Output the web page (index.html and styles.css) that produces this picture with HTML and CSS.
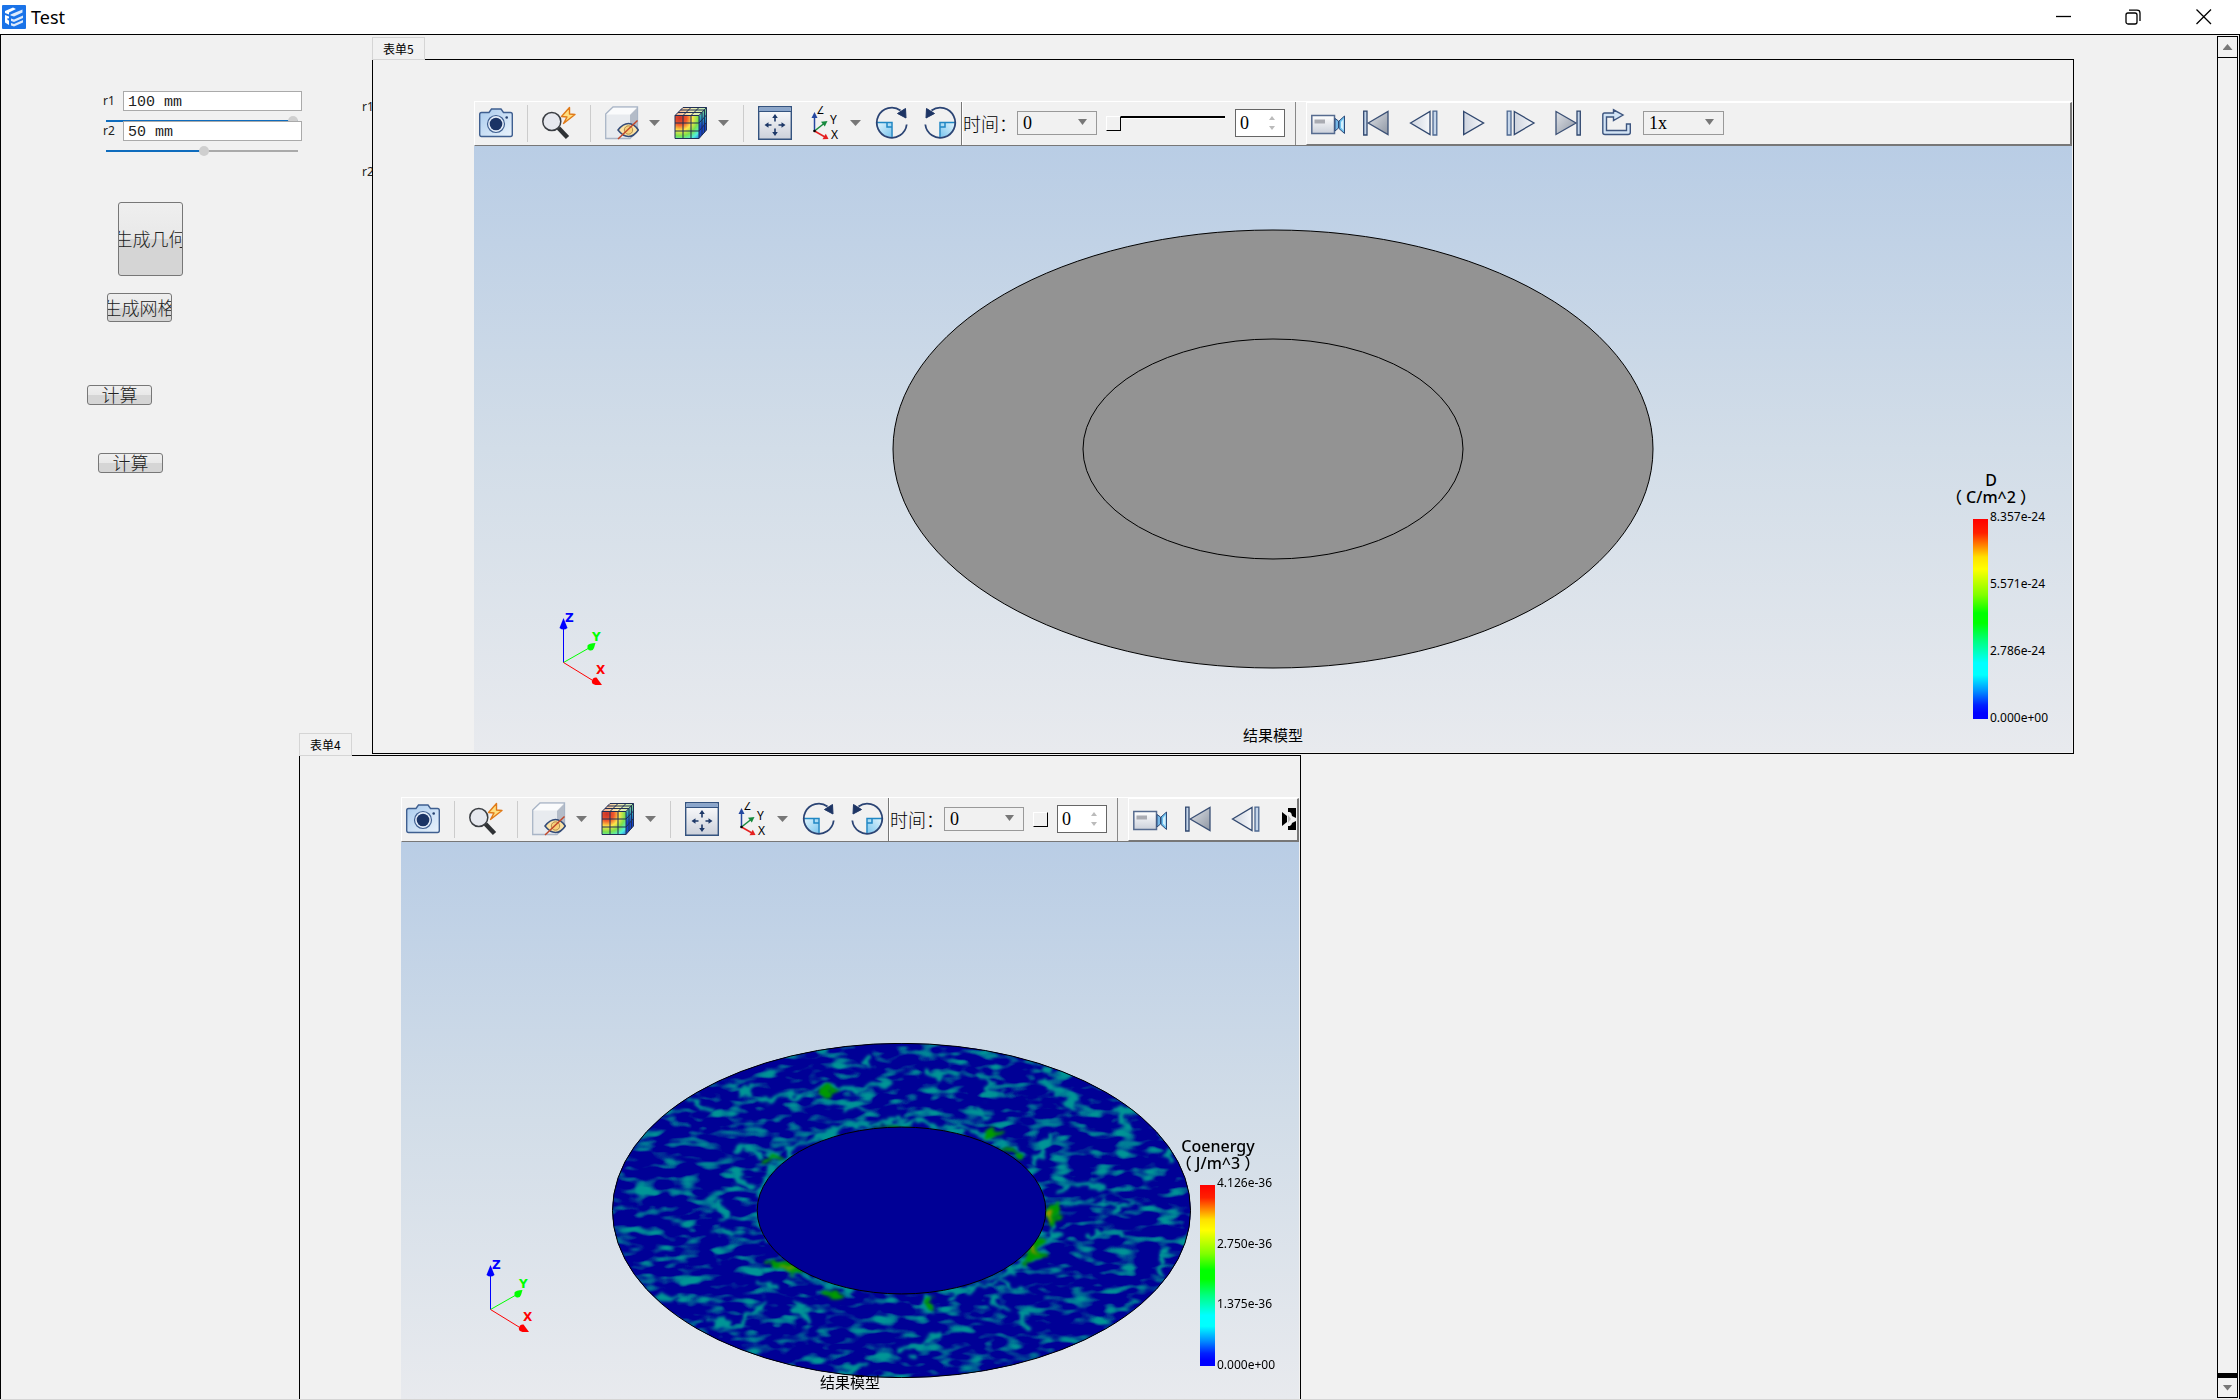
FILE: index.html
```html
<!DOCTYPE html>
<html lang="zh-CN">
<head>
<meta charset="utf-8">
<title>Test</title>
<link rel="stylesheet" href="styles.css">
</head>
<body>
<svg class="defs" aria-hidden="true">
  <defs>
    <linearGradient id="g-cam" x1="0" y1="0" x2="1" y2="1"><stop offset="0" stop-color="#a9cbee"/><stop offset="1" stop-color="#eaf3fc"/></linearGradient>
    <linearGradient id="g-light" x1="0" y1="0" x2="1" y2="0"><stop offset="0" stop-color="#cdd3de"/><stop offset="1" stop-color="#f6f8fb"/></linearGradient>
    <linearGradient id="g-dark" x1="0" y1="0" x2="1" y2="1"><stop offset="0" stop-color="#e0e3e8"/><stop offset="1" stop-color="#8e96a3"/></linearGradient>
    <linearGradient id="g-body" x1="0" y1="0" x2="0" y2="1"><stop offset="0" stop-color="#fff"/><stop offset="1" stop-color="#cbd0da"/></linearGradient>
    <linearGradient id="g-pie" x1="0" y1="0" x2="1" y2="1"><stop offset="0" stop-color="#e2f5fd"/><stop offset="1" stop-color="#7cc6ee"/></linearGradient>
    <radialGradient id="g-heat" gradientUnits="userSpaceOnUse" cx="6" cy="12" r="31"><stop offset="0" stop-color="#c8322a"/><stop offset=".22" stop-color="#f0582c"/><stop offset=".4" stop-color="#fde54a"/><stop offset=".58" stop-color="#7be04c"/><stop offset=".75" stop-color="#4ff0dc"/><stop offset=".92" stop-color="#2468e8"/></radialGradient>
    <linearGradient id="g-top" x1="0" y1="0" x2="1" y2="0"><stop offset="0" stop-color="#f2a58c"/><stop offset=".5" stop-color="#f7edb0"/><stop offset="1" stop-color="#b8ecb0"/></linearGradient>
    <linearGradient id="g-side" x1="0" y1="0" x2="0" y2="1"><stop offset="0" stop-color="#8fdc7a"/><stop offset=".35" stop-color="#2c9cc0"/><stop offset=".6" stop-color="#1846c8"/></linearGradient>
    <symbol id="i-camera" viewBox="0 0 34 34">
      <path d="M2.500 6.500H10L12.500 3H22L24.500 6.500H31.500Q33.300 6.500 33.300 8.500V28.500Q33.300 30.500 31.500 30.500H2.500Q.7 30.500 .7 28.500V8.500Q.7 6.500 2.500 6.500Z" fill="url(#g-cam)" stroke="#3f5f90" stroke-width="1.400"/>
      <circle cx="17" cy="18" r="8.500" fill="#e4eefa" stroke="#3f5f90" stroke-width="1.200"/><circle cx="17" cy="18" r="6.300" fill="#1b3465"/><circle cx="27.700" cy="11.500" r="1.300" fill="#24406f"/>
    </symbol>
    <symbol id="i-find" viewBox="0 0 34 34">
      <path d="M16.500 22L25.500 31.500" stroke="#2f3235" stroke-width="4.500"/><circle cx="9.800" cy="15.500" r="9" fill="#e6e8ee" stroke="#3a3d42" stroke-width="1.500"/>
      <path d="M27.500 1.500L19.500 10.500L25 11L21.500 17.500L33 8.500L27.500 8Z" fill="#ffdf80" stroke="#e07a18" stroke-width="1.400" stroke-linejoin="round"/>
    </symbol>
    <symbol id="i-hide" viewBox="0 0 34 34">
      <path d="M.7 8L8 1H32.500V25L25 32.500H.7Z" fill="#e8ebef" stroke="#a9b5c6" stroke-width="1.300"/><path d="M1.500 8.500L8.500 1.700H31.500L25 8.500Z" fill="#fafbfc"/><path d="M25 9L32 2V25L25 32Z" fill="#b4bcc8"/>
      <path d="M13 24Q18 17.500 23.500 17.500T33.300 24Q29 30.500 23.500 30.500T13 24Z" fill="#fbe2a4" stroke="#334b78" stroke-width="1.500"/><circle cx="23.500" cy="24" r="4.200" fill="#f8cf78" stroke="#b08d4c"/>
      <path d="M13 33L32.500 14.500" stroke="#c2482a" stroke-width="1.500"/>
    </symbol>
    <symbol id="i-heat" viewBox="0 0 34 34">
      <path d="M1 9.500L9 1.500H32.500L25 9.500Z" fill="url(#g-top)"/><path d="M25 9.500L32.500 1.500V24L25 32.500Z" fill="url(#g-side)"/><path d="M1 9.500H25V32.500H1Z" fill="url(#g-heat)"/>
      <path d="M1 9.500H25V32.500H1ZM1 17H25L32.500 9M1 25H25L32.500 16.500M9 32.500V9.500L17 1.500M17 32.500V9.500L25 1.500M25 9.500L32.500 1.500V24L25 32.500M1 9.500L9 1.500H32.500M4 6.500H28V29M6.500 4H30.500V26.500" fill="none" stroke="#1f2f55" stroke-width="1"/>
    </symbol>
    <symbol id="i-fit" viewBox="0 0 34 34">
      <path d="M.7 .7H33.300V33.300H.7Z" fill="url(#g-body)" stroke="#34537f" stroke-width="1.400"/><path d="M1.400 1.400H32.600V5H1.400Z" fill="#8ba6cb"/><path d="M1 5.500H33" stroke="#34537f"/>
      <path d="M17 15.500V10M17 22.500V28M13.500 19H8M20.500 19H26" stroke="#1d3868" stroke-width="1.600"/><path d="M17 8L19.800 12H14.200ZM17 30L19.800 26H14.200ZM6.500 19L10.500 16.200V21.800ZM27.500 19L23.500 16.200V21.800Z" fill="#1d3868"/>
    </symbol>
    <symbol id="i-axes" viewBox="0 0 34 34">
      <path d="M8.500 25V10" stroke="#2447a0" stroke-width="1.500"/><path d="M8.500 6L11.500 12H5.500Z" fill="#2447a0"/><path d="M8.500 25L18 17.500" stroke="#178a3e" stroke-width="1.500"/><path d="M21.500 15L18.800 20.500L15 15.700Z" fill="#178a3e"/><path d="M8.500 25L19 31" stroke="#e52020" stroke-width="1.500"/><path d="M22.500 33L19.800 27.800L16.500 33.200Z" fill="#e52020"/><circle cx="8.500" cy="25" r="1.300"/>
      <text class="axis-letter" x="11" y="8">Z</text><text class="axis-letter" x="24" y="17.500">Y</text><text class="axis-letter" x="25" y="33">X</text>
    </symbol>
    <symbol id="i-cw" viewBox="0 0 34 34">
      <path d="M16.500 16.500H2A14.500 14.500 0 0 0 16.500 31Z" fill="url(#g-pie)"/><path d="M1.500 16.500H17V31.500M12 16.500V21H17" fill="none" stroke="#1f87c4" stroke-width="1.500"/>
      <path d="M31.700 18.500A15 15 0 1 1 25.500 4.500" fill="none" stroke="#2b4474" stroke-width="1.800"/><path d="M22.500 7.500L30.500 2.500L31 12Z" fill="#1d3464" stroke="#1d3464"/>
    </symbol>
    <symbol id="i-ccw" viewBox="0 0 34 34"><g transform="matrix(-1 0 0 1 34 0)">
      <path d="M16.500 16.500H2A14.500 14.500 0 0 0 16.500 31Z" fill="url(#g-pie)"/><path d="M1.500 16.500H17V31.500M12 16.500V21H17" fill="none" stroke="#1f87c4" stroke-width="1.500"/>
      <path d="M31.700 18.500A15 15 0 1 1 25.500 4.500" fill="none" stroke="#2b4474" stroke-width="1.800"/><path d="M22.500 7.500L30.500 2.500L31 12Z" fill="#1d3464" stroke="#1d3464"/></g>
    </symbol>
    <symbol id="i-video" viewBox="0 0 34 34">
      <path d="M.8 9.500H23.500V27.500H.8Z" fill="url(#g-body)" stroke="#566b8f" stroke-width="1.500"/><path d="M3.500 13.500H14V17.500H3.500Z" fill="#a9abb2"/>
      <path d="M24 12.500L27.500 15V22L24 25Z" fill="#76b7e6" stroke="#2d4a78"/><path d="M28 15L33.500 10V27.500L28 22.500Z" fill="#6cc0ee" stroke="#2d4a78"/><path d="M30 16L32.500 13V24.500L30 21.500Z" fill="#d5f0fc"/>
    </symbol>
    <symbol id="i-first" viewBox="0 0 34 34"><path d="M4.700 5.200H8V29H4.700Z" fill="#c5d6ea" stroke="#31486f" stroke-width="1.300"/><path d="M9.200 17L29 5.500V28.500Z" fill="url(#g-dark)" stroke="#3b5075" stroke-width="1.300"/></symbol>
    <symbol id="i-prev" viewBox="0 0 34 34"><path d="M3.500 17L23 5.500V28.500Z" fill="url(#g-light)" stroke="#31486f" stroke-width="1.300"/><path d="M26 5.200H29.800V29H26Z" fill="#c5d6ea" stroke="#4d6891" stroke-width="1.300"/></symbol>
    <symbol id="i-play" viewBox="0 0 34 34"><path d="M8.700 5.500L28.500 17L8.700 28.500Z" fill="url(#g-light)" stroke="#31486f" stroke-width="1.400"/></symbol>
    <symbol id="i-next" viewBox="0 0 34 34"><path d="M4.200 5.200H8V29H4.200Z" fill="#c5d6ea" stroke="#4d6891" stroke-width="1.300"/><path d="M11.300 5.500L31 17L11.300 28.500Z" fill="url(#g-light)" stroke="#31486f" stroke-width="1.300"/></symbol>
    <symbol id="i-last" viewBox="0 0 34 34"><path d="M5 5.500L25 17L5 28.500Z" fill="url(#g-dark)" stroke="#3b5075" stroke-width="1.300"/><path d="M26 5.200H29.300V29H26Z" fill="#c5d6ea" stroke="#31486f" stroke-width="1.300"/></symbol>
    <symbol id="i-export" viewBox="0 0 34 34"><path d="M5.500 7H14.500V3.800L24 9L14.500 14.500V11H7.500V24.500H27.500V18H31.300V26.500Q31.300 28.500 29 28.500H6Q3.800 28.500 3.800 26.500V9Q3.800 7 5.500 7Z" fill="#d3e4f5" stroke="#3d557f" stroke-width="1.400"/></symbol>
    <symbol id="triad" viewBox="0 0 50 76">
      <path d="M6.500 52.500V18" stroke="#00f"/><path d="M6.500 8L8.500 13L10.500 18Q6.500 21 2.500 18L4.500 13Z" fill="#00f"/>
      <path d="M6.500 52.500L32 38" stroke="#0f0"/><path d="M38.500 33L37 38Q36 41 33 40.500T30.500 35.500Q32 33 38.500 33Z" fill="#0f0"/>
      <path d="M6.500 52.500L35 70" stroke="red"/><path d="M45 75L39.500 67.500Q36 67 35 70.500T38.500 75Z" fill="red"/>
      <text class="triad-letter" x="8" y="12" fill="#00f">Z</text><text class="triad-letter" x="35" y="31" fill="#0f0">Y</text><text class="triad-letter" x="39" y="64" fill="red">X</text>
    </symbol>
  </defs>
</svg>

<header class="titlebar">
  <svg class="logo" viewBox="0 0 24 24"><rect width="24" height="24" rx="1" fill="#1a73e8"/><path d="M3 6L11 2.500L14 4L7 7.500V9.500L3 8ZM3 10L7 11.500V13.500L5.500 13V15L7 15.600V20L3 17.500Z" fill="#fff"/><path d="M8.500 9.500L20.500 4.500V7.500L12 11.500L8.500 10.500ZM9 13.500L12 14.500L21 10.500V13L12 17L9 16ZM9 18L12 19L21 15V17.500L12 21.500L9 20.500Z" fill="#dceafc"/></svg>
  <h1 class="title">Test</h1>
  <div class="window-controls">
    <button type="button" aria-label="最小化"><svg viewBox="0 0 16 16"><path d="M0 7.500H15"/></svg></button>
    <button type="button" aria-label="还原"><svg viewBox="0 0 16 16"><rect x="0" y="4" width="11" height="11" rx="2"/><path d="M3 1.200H11Q14 1.200 14 4V12"/></svg></button>
    <button type="button" aria-label="关闭"><svg viewBox="0 0 16 16"><path d="M.5 .5L15 15M15 .5L.5 15"/></svg></button>
  </div>
</header>

<main class="workspace">
  <section class="params">
    <div class="param">
      <div class="param-row"><label for="r1">r1</label><input class="value" id="r1" type="text" value="100 mm"></div>
      <input class="range" type="range" min="0" max="100" value="100" style="--fill:100%" aria-label="r1">
    </div>
    <div class="param">
      <div class="param-row"><label for="r2">r2</label><input class="value" id="r2" type="text" value="50 mm"></div>
      <input class="range" type="range" min="0" max="100" value="51" style="--fill:51%" aria-label="r2">
    </div>
    <button type="button" class="action action-geometry">生成几何</button>
    <button type="button" class="action action-mesh">生成网格</button>
    <button type="button" class="action action-solve">计算</button>
    <button type="button" class="action action-solve-more">计算</button>
    <span class="hidden-label hidden-label-r1">r1</span>
    <span class="hidden-label hidden-label-r2">r2</span>
  </section>

  <section class="form form-geometry">
    <h2 class="tab">表单5</h2>
    <div class="frame">
      <div class="toolbar">
        <div class="tools">
          <button type="button" aria-label="截图"><svg><use href="#i-camera"/></svg></button><span class="sep"></span>
          <button type="button" aria-label="查询"><svg><use href="#i-find"/></svg></button><span class="sep"></span>
          <div class="split"><button type="button" aria-label="隐藏"><svg><use href="#i-hide"/></svg></button><button type="button" class="more" aria-label="隐藏选项"></button></div>
          <div class="split"><button type="button" aria-label="云图"><svg><use href="#i-heat"/></svg></button><button type="button" class="more" aria-label="云图选项"></button></div><span class="sep"></span>
          <button type="button" aria-label="适应窗口"><svg><use href="#i-fit"/></svg></button>
          <div class="split"><button type="button" aria-label="视角"><svg><use href="#i-axes"/></svg></button><button type="button" class="more" aria-label="视角选项"></button></div>
          <button type="button" aria-label="顺时针旋转"><svg><use href="#i-cw"/></svg></button>
          <button type="button" aria-label="逆时针旋转"><svg><use href="#i-ccw"/></svg></button>
        </div>
        <div class="time">
          <label for="time5">时间：</label>
          <span class="combo"><select id="time5"><option>0</option></select></span>
          <input class="step" type="range" min="0" max="100" value="0" aria-label="时间步">
          <span class="spin"><input type="number" value="0" aria-label="步数"></span>
        </div>
        <div class="player">
          <button type="button" aria-label="录制"><svg><use href="#i-video"/></svg></button>
          <button type="button" aria-label="第一帧"><svg><use href="#i-first"/></svg></button>
          <button type="button" aria-label="上一帧"><svg><use href="#i-prev"/></svg></button>
          <button type="button" aria-label="播放"><svg><use href="#i-play"/></svg></button>
          <button type="button" aria-label="下一帧"><svg><use href="#i-next"/></svg></button>
          <button type="button" aria-label="最后一帧"><svg><use href="#i-last"/></svg></button>
          <button type="button" aria-label="导出"><svg><use href="#i-export"/></svg></button>
          <span class="combo combo-speed"><select aria-label="速度"><option>1x</option></select></span>
        </div>
      </div>
      <div class="view">
        <svg class="disc" viewBox="0 0 762 440"><ellipse cx="381" cy="220" rx="380" ry="219" fill="#939393" stroke="#000"/><ellipse cx="381" cy="220" rx="190" ry="110" fill="none" stroke="#000"/></svg>
        <svg class="triad"><use href="#triad"/></svg>
        <div class="legend">
          <p class="legend-title">D<br>（ C/m^2 ）</p>
          <div class="legend-bar"></div>
          <ul class="legend-values"><li>8.357e-24</li><li>5.571e-24</li><li>2.786e-24</li><li>0.000e+00</li></ul>
        </div>
        <p class="caption">结果模型</p>
      </div>
    </div>
  </section>

  <section class="form form-result">
    <h2 class="tab">表单4</h2>
    <div class="frame">
      <div class="toolbar">
        <div class="tools">
          <button type="button" aria-label="截图"><svg><use href="#i-camera"/></svg></button><span class="sep"></span>
          <button type="button" aria-label="查询"><svg><use href="#i-find"/></svg></button><span class="sep"></span>
          <div class="split"><button type="button" aria-label="隐藏"><svg><use href="#i-hide"/></svg></button><button type="button" class="more" aria-label="隐藏选项"></button></div>
          <div class="split"><button type="button" aria-label="云图"><svg><use href="#i-heat"/></svg></button><button type="button" class="more" aria-label="云图选项"></button></div><span class="sep"></span>
          <button type="button" aria-label="适应窗口"><svg><use href="#i-fit"/></svg></button>
          <div class="split"><button type="button" aria-label="视角"><svg><use href="#i-axes"/></svg></button><button type="button" class="more" aria-label="视角选项"></button></div>
          <button type="button" aria-label="顺时针旋转"><svg><use href="#i-cw"/></svg></button>
          <button type="button" aria-label="逆时针旋转"><svg><use href="#i-ccw"/></svg></button>
        </div>
        <div class="time">
          <label for="time4">时间：</label>
          <span class="combo"><select id="time4"><option>0</option></select></span>
          <input class="step step-short" type="range" min="0" max="100" value="0" aria-label="时间步">
          <span class="spin"><input type="number" value="0" aria-label="步数"></span>
        </div>
        <div class="player">
          <button type="button" aria-label="录制"><svg><use href="#i-video"/></svg></button>
          <button type="button" aria-label="第一帧"><svg><use href="#i-first"/></svg></button>
          <button type="button" aria-label="上一帧"><svg><use href="#i-prev"/></svg></button>
          <button type="button" class="overflow" aria-label="更多"><svg viewBox="0 0 14 22"><path d="M0 4L5 8V14L0 18ZM6 0H14V8L6 3ZM14 14V22H6V19Z"/><path d="M6 0H14V10L10 8L9 4H6ZM14 13V22H6V18H9L10 15Z"/><path d="M6 7L9 11L6 15Z" fill="#bbb"/></svg></button>
        </div>
      </div>
      <div class="view">
        <svg class="field" viewBox="48 69 1260 1004" preserveAspectRatio="none">
          <defs>
            <clipPath id="disc-clip"><ellipse cx="678" cy="571" rx="629" ry="501"/></clipPath>
            <filter id="speckle" x="0" y="0" width="100%" height="100%" color-interpolation-filters="sRGB">
              <feTurbulence type="fractalNoise" baseFrequency=".021 .034" numOctaves="2" seed="11"/>
              <feColorMatrix values="0 0 0 0 0  2.4 1.2 0 0 -1.76  0 0 0 0 .59  0 0 0 0 1"/>
              <feComponentTransfer><feFuncG type="table" tableValues="0 .16 .34 .48 .57 .59"/></feComponentTransfer>
            </filter>
            <filter id="warp" x="-10%" y="-10%" width="120%" height="120%" color-interpolation-filters="sRGB">
              <feTurbulence type="fractalNoise" baseFrequency=".03" numOctaves="2" seed="4" result="n"/>
              <feDisplacementMap in="SourceGraphic" in2="n" scale="60" xChannelSelector="R" yChannelSelector="G"/>
              <feGaussianBlur stdDeviation="4"/>
            </filter>
          </defs>
          <g clip-path="url(#disc-clip)">
            <rect x="48" y="69" width="1260" height="1004" fill="#000096"/>
            <rect x="48" y="69" width="1260" height="1004" filter="url(#speckle)"/>
            <g filter="url(#warp)" fill="none" stroke="#009696" stroke-width="15" stroke-linecap="round" stroke-linejoin="round">
              <path d="M370 243L450 225L500 205L600 205L660 185M730 145L745 165L800 160M850 175L870 205L900 215M985 190L1050 230L1045 260M1000 350L985 410L965 435M1020 515L1075 485L1115 505M1040 550H1180M1090 640H1150M680 995L720 970L760 945M560 1060L600 1030M270 905L330 910L375 850M290 550L285 590M270 635H330M1250 690L1255 750M850 265L858 300"/>
              <path d="M385 660L372 560L390 460L440 390L530 335L600 312L680 306L780 315L870 345L940 400M1008 560L1018 620L985 680L930 745L860 795L790 822M560 805L480 770L410 735" stroke-dasharray="30 16 50 12"/>
              <path d="M330 380L370 405M320 460L350 500M880 840L920 870M735 830V870M900 790L930 810M440 850L480 900M160 830H210M375 775L400 800M570 260L595 275M1150 265L1165 320M230 245L270 280M340 195V220M605 130V135M980 140L1000 150M1260 400V420M945 880L950 910"/>
            </g>
            <g filter="url(#warp)" fill="#009a00">
              <ellipse cx="522" cy="211" rx="20" ry="9"/><ellipse cx="1010" cy="585" rx="18" ry="36"/><ellipse cx="968" cy="690" rx="18" ry="32" transform="rotate(30 968 690)"/><ellipse cx="428" cy="738" rx="38" ry="13" transform="rotate(24 428 738)"/><ellipse cx="528" cy="824" rx="22" ry="14"/><ellipse cx="878" cy="338" rx="22" ry="12"/><ellipse cx="916" cy="398" rx="30" ry="9" transform="rotate(35 916 398)"/><ellipse cx="742" cy="842" rx="9" ry="14"/><ellipse cx="660" cy="322" rx="36" ry="7"/><ellipse cx="400" cy="412" rx="14" ry="7"/>
              <ellipse cx="1008" cy="586" rx="7" ry="16" fill="#a89000"/><ellipse cx="966" cy="686" rx="8" ry="12" fill="#a89000"/><ellipse cx="428" cy="740" rx="13" ry="6" fill="#7c9800"/>
            </g>
          </g>
          <ellipse class="outline" cx="678" cy="571" rx="314" ry="250" fill="#000096"/>
          <ellipse class="outline" cx="678" cy="571" rx="629" ry="501" fill="none"/>
        </svg>
        <svg class="triad"><use href="#triad"/></svg>
        <div class="legend">
          <p class="legend-title">Coenergy<br>（ J/m^3 ）</p>
          <div class="legend-bar"></div>
          <ul class="legend-values"><li>4.126e-36</li><li>2.750e-36</li><li>1.375e-36</li><li>0.000e+00</li></ul>
        </div>
        <p class="caption">结果模型</p>
      </div>
    </div>
  </section>

  <div class="scrollbar">
    <button type="button" class="scroll-up" aria-label="向上滚动"></button>
    <button type="button" class="scroll-down" aria-label="向下滚动"></button>
  </div>
</main>
</body>
</html>
```

FILE: styles.css
```css
* { box-sizing: border-box; }
body {
  margin: 0;
  height: 100vh;
  overflow: hidden;
  display: flex;
  flex-direction: column;
  background: #f1f1f1;
  border-bottom: 1px solid #d5d5d5;
  font-family: "Noto Sans", "Noto Sans CJK SC", sans-serif;
  font-size: 12px;
  color: #000;
}
h1, h2, p, ul { margin: 0; padding: 0; font-weight: 400; list-style: none; }
button { margin: 0; padding: 0; border: 0; background: none; color: inherit; }
.defs { position: absolute; width: 0; height: 0; }

/* title bar */
.titlebar {
  flex: none;
  height: 34px;
  display: flex;
  align-items: center;
  gap: 5px;
  padding-left: 2px;
  background: #fff;
}
.logo { width: 24px; height: 24px; }
.title { font-size: 18px; line-height: 24px; }
.window-controls { display: flex; gap: 54px; margin-left: auto; padding-right: 28px; }
.window-controls svg { display: block; width: 16px; height: 16px; fill: none; stroke: #000; stroke-width: 1.3; overflow: visible; }

/* workspace */
.workspace {
  flex: 1;
  min-height: 0;
  display: flex;
  justify-content: space-between;
  position: relative;
  border: 1px solid #000;
  border-bottom: 0;
}

/* parameter panel */
.params { width: 371px; padding: 56px 0 0 102px; }
.param { position: relative; height: 30px; }
.param-row { position: relative; display: flex; align-items: center; }
.param-row label { width: 20px; color: #222; line-height: 20px; }
.value {
  width: 179px;
  height: 20px;
  padding: 2px 4px 0;
  border: 1px solid #aaa;
  background: #fff;
  font: 15px/16px "Liberation Mono", monospace;
  color: #222;
}
.range {
  appearance: none;
  display: block;
  width: 192px;
  height: 10px;
  margin: 5px 0 0 3px;
  background: linear-gradient(#0f6cbd, #0f6cbd) 0 4px / var(--fill) 2px no-repeat, linear-gradient(#aaa, #aaa) 0 4px / 100% 2px no-repeat;
}
.range::-webkit-slider-thumb { appearance: none; width: 10px; height: 10px; border-radius: 50%; background: #cfcfcf; }
.action {
  display: flex;
  align-items: center;
  justify-content: center;
  width: 65px;
  padding-bottom: 2px;
  overflow: hidden;
  border: 1px solid #777;
  border-radius: 3px;
  background: linear-gradient(#efefef, #e8e8e8 50%, #d5d5d5 50%, #d5d5d5);
  font: 300 18px/18px "Noto Sans CJK SC", sans-serif;
  color: #222;
  white-space: nowrap;
}
.action-geometry { height: 74px; margin: 51px 0 0 15px; }
.action-mesh { height: 29px; margin: 17px 0 0 4px; }
.action-solve { height: 20px; margin: 63px 0 0 -16px; }
.action-solve-more { height: 20px; margin: 48px 0 0 -5px; }
.hidden-label { position: absolute; left: 361px; line-height: 20px; color: #222; }
.hidden-label-r1 { top: 62px; }
.hidden-label-r2 { top: 127px; }

/* form windows */
.form { position: absolute; display: flex; flex-direction: column; }
.form-geometry { left: 371px; right: 165px; top: 2px; height: 717px; }
.form-result { left: 298px; width: 1002px; top: 698px; bottom: 0; }
.tab {
  position: relative;
  z-index: 1;
  align-self: flex-start;
  height: 23px;
  margin-bottom: -1px;
  padding: 0 10px;
  border: 1px solid #d5d5d5;
  background: #f1f1f1;
  font: 12px/22px "Noto Sans CJK SC", sans-serif;
}
.frame {
  flex: 1;
  min-height: 0;
  display: flex;
  flex-direction: column;
  padding: 41px 1px 1px 101px;
  border: 1px solid #000;
  background: #f1f1f1;
}
.form-result .frame { padding-bottom: 0; border-bottom: 0; }

/* toolbar */
.toolbar {
  flex: none;
  display: flex;
  height: 45px;
  border-top: 1px solid #fff;
  border-left: 1px solid #fff;
  border-bottom: 1px solid #777;
  line-height: 24px;
}
.toolbar svg { display: block; width: 34px; height: 34px; }
.tools { flex: none; display: flex; align-items: center; gap: 14px; padding: 0 4px 1px; }
.sep { width: 1px; height: 37px; background: #ccc; }
.split { display: flex; align-items: center; gap: 10px; }
.more { width: 11px; height: 6px; background: #777; clip-path: polygon(0 0, 100% 0, 50% 100%); }
.time {
  flex: none;
  display: flex;
  align-items: center;
  padding: 0 10px 1px 0;
  border-left: 1px solid #777;
  border-right: 1px solid #888;
  box-shadow: inset 1px 0 #fff;
}
.time label { margin-left: 1px; font: 300 18px/24px "Noto Sans CJK SC", sans-serif; }
.combo { position: relative; width: 80px; height: 24px; }
.combo::after {
  content: "";
  position: absolute;
  right: 10px;
  top: 8px;
  width: 9px;
  height: 6px;
  background: #777;
  clip-path: polygon(0 0, 100% 0, 50% 100%);
  pointer-events: none;
}
.combo select {
  appearance: none;
  display: block;
  width: 100%;
  height: 24px;
  padding: 0 5px;
  border: 1px solid #999;
  border-radius: 0;
  background: #f1f1f1;
  font: 18px/22px "Liberation Serif", serif;
  color: #000;
}
.step {
  appearance: none;
  width: 119px;
  height: 15px;
  margin: 0 10px 0 9px;
  background: linear-gradient(#000 2px, #fff 2px, #fff 3px, transparent 3px) 0 0 no-repeat;
}
.step::-webkit-slider-thumb {
  appearance: none;
  width: 15px;
  height: 15px;
  border: 1px solid #000;
  border-top-color: #fff;
  border-left-color: #fff;
  background: #f1f1f1;
}
.step-short { width: 15px; margin-right: 9px; }
.spin { position: relative; width: 50px; height: 28px; }
.spin input {
  appearance: textfield;
  display: block;
  width: 50px;
  height: 28px;
  padding: 0 4px;
  border: 1px solid #666;
  background: #fff;
  font: 18px/26px "Liberation Serif", serif;
}
.spin input::-webkit-inner-spin-button { appearance: none; }
.spin::before, .spin::after {
  content: "";
  position: absolute;
  right: 10px;
  width: 6px;
  height: 4px;
  background: #bbb;
}
.spin::before { top: 7px; clip-path: polygon(50% 0, 100% 100%, 0 100%); }
.spin::after { bottom: 7px; clip-path: polygon(0 0, 100% 0, 50% 100%); }
.player {
  flex: 1;
  min-width: 0;
  display: flex;
  align-items: center;
  gap: 14px;
  margin-left: 10px;
  padding: 0 0 1px 4px;
  border: 1px solid #fff;
  border-right: 2px solid #777;
  border-bottom: 1px solid #777;
}
.combo-speed { width: 81px; margin-left: -4px; }
.overflow { margin-left: 5px; }
.toolbar .overflow svg { width: 14px; height: 22px; }
.axis-letter { font: 12px "Noto Sans", sans-serif; }

/* result view */
.view {
  flex: 1;
  min-height: 0;
  position: relative;
  display: grid;
  place-items: center;
  overflow: hidden;
  background: linear-gradient(#b9cde5, #d2dde8 50%, #e8eaee);
}
.disc { width: 762px; height: 440px; }
.field { position: absolute; left: 211px; top: 201px; width: 579px; height: 335px; }
.outline { stroke: #000; stroke-width: 1; vector-effect: non-scaling-stroke; }
.triad { position: absolute; left: 83px; bottom: 66px; width: 50px; height: 76px; }
.triad-letter { font: bold 12px "DejaVu Sans", sans-serif; }
.caption {
  position: absolute;
  left: 0;
  right: 0;
  bottom: 8px;
  font: 15px/18px "Noto Sans CJK SC", sans-serif;
  text-align: center;
}
.legend {
  position: absolute;
  right: 16px;
  bottom: 33px;
  width: 126px;
  height: calc(40% - 42px);
  display: grid;
  grid-template-columns: 15px 1fr;
  padding-left: 43px;
  column-gap: 2px;
}
.legend-title {
  position: absolute;
  left: 0;
  bottom: 100%;
  width: 122px;
  padding-bottom: 13px;
  font: 500 16px/17px "Noto Sans", "Noto Sans CJK SC", sans-serif;
  text-align: center;
  white-space: nowrap;
}
.legend-bar {
  background: linear-gradient(#f00, #ff2000 7%, #ff9000 14%, #ffe000 19%, #ff0 25%, #80ff00 38%, #0f0 47%, #0f0 52%, #00ff80 61%, #0ff 72%, #0ff 78%, #0090ff 86%, #0020ff 93%, #00f 97%);
}
.legend-values {
  display: flex;
  flex-direction: column;
  justify-content: space-between;
  margin: -10px 0 -7px;
  font-size: 12px;
  line-height: 16px;
}

/* page scrollbar */
.scrollbar {
  display: flex;
  flex-direction: column;
  justify-content: space-between;
  width: 21px;
  margin: 1px 1px 1px 0;
  border: 1px solid #000;
}
.scroll-up, .scroll-down { display: grid; place-items: center; }
.scroll-up { height: 21px; border-bottom: 1px solid #000; }
.scroll-down { height: 24px; border-top: 5px solid #000; }
.scroll-up::before, .scroll-down::before { content: ""; width: 10px; height: 6px; background: #777; }
.scroll-up::before { clip-path: polygon(50% 0, 100% 100%, 0 100%); }
.scroll-down::before { clip-path: polygon(0 0, 100% 0, 50% 100%); }
```
